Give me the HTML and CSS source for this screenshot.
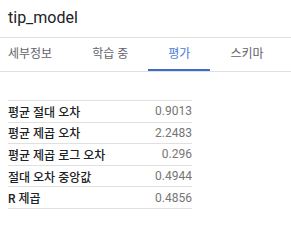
FILE: index.html
```html
<!DOCTYPE html>
<html lang="ko">
<head>
<meta charset="utf-8">
<link rel="stylesheet" href="styles.css">
</head>
<body>
<div class="header">tip_model</div>
<div class="tabs">
  <div class="tab first">세부정보</div>
  <div class="tab">학습 중</div>
  <div class="tab active">평가</div>
  <div class="tab">스키마</div>
</div>
<table class="metrics">
  <tr><td class="label">평균 절대 오차</td><td class="value">0.9013</td></tr>
  <tr><td class="label">평균 제곱 오차</td><td class="value">2.2483</td></tr>
  <tr><td class="label">평균 제곱 로그 오차</td><td class="value">0.296</td></tr>
  <tr><td class="label">절대 오차 중앙값</td><td class="value">0.4944</td></tr>
  <tr><td class="label">R 제곱</td><td class="value">0.4856</td></tr>
</table>
</body>
</html>
```
FILE: styles.css
```css
html, body {
  margin: 0;
  padding: 0;
  background: #fff;
  font-family: Roboto, "Noto Sans CJK KR", sans-serif;
  color: #202124;
}
.header {
  height: 38px;
  box-sizing: border-box;
  padding: 7px 8px 0;
  font-size: 16px;
  line-height: 22px;
  border-bottom: 1px solid #e0e0e0;
}
.tabs {
  display: flex;
  height: 33px;
  border-bottom: 1px solid #e0e0e0;
  padding-left: 8px;
}
.tab {
  padding: 0 20px;
  font-size: 12px;
  line-height: 33px;
  color: #5f6368;
  box-sizing: border-box;
  border-bottom: 2px solid transparent;
  height: 33px;
}
.tab.first { padding-left: 0; }
.tab.active {
  color: #4a7bd6;
  border-bottom-color: #3c6bc9;
}
.metrics {
  margin: 28px 0 0 8px;
  border-collapse: collapse;
  width: 184px;
  font-size: 12px;
}
.metrics td {
  border-top: 1px solid #e0e0e0;
  border-bottom: 1px solid #e0e0e0;
  height: 21.6px;
  padding: 0;
  box-sizing: border-box;
}
.label {
  font-weight: 500;
  color: #202124;
}
.value {
  text-align: right;
  color: #757575;
}
```
